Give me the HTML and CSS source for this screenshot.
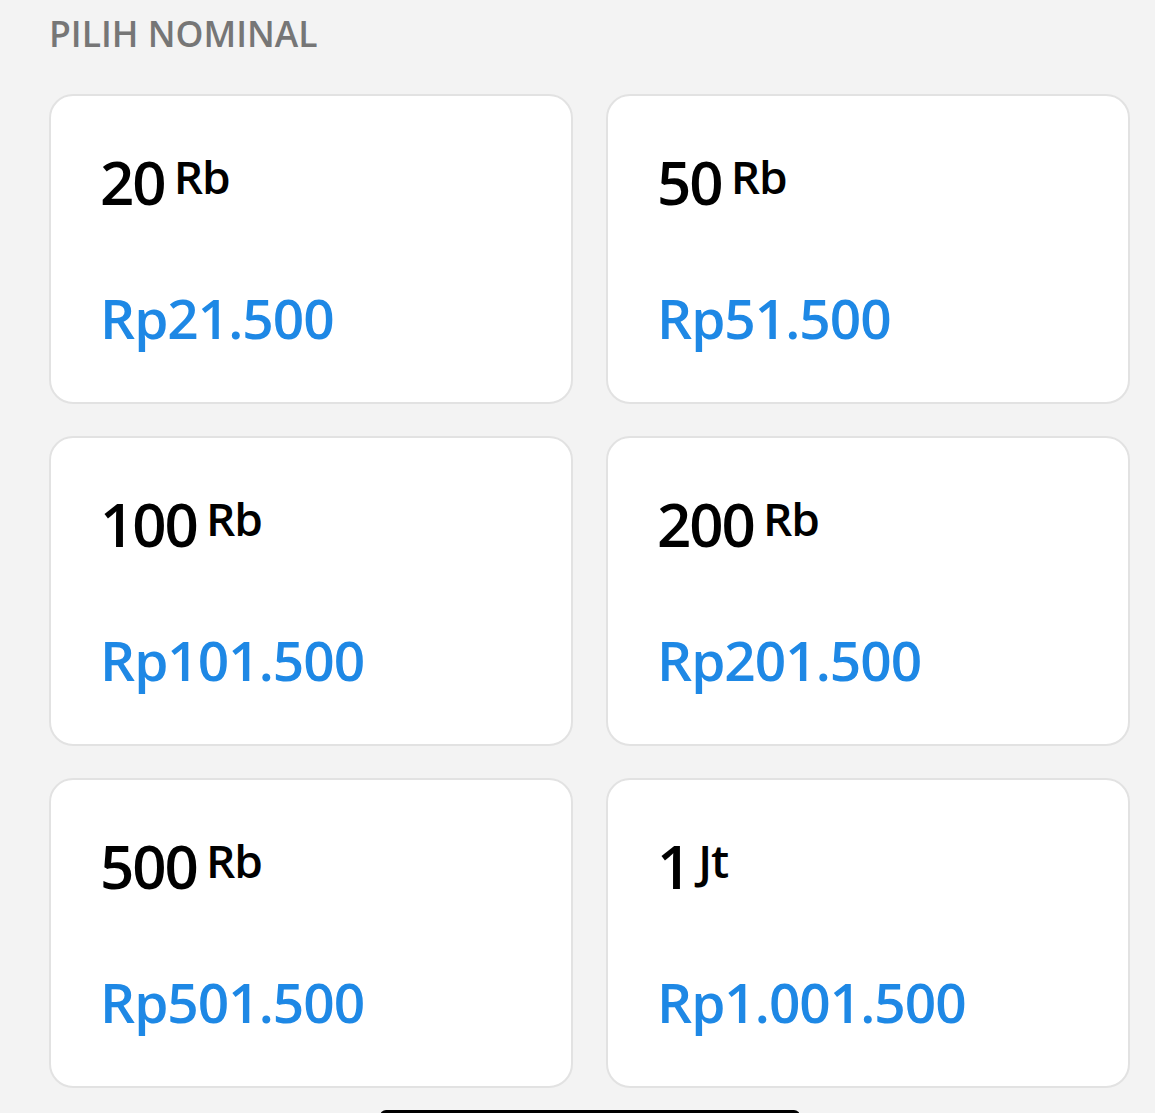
FILE: index.html
```html
<!DOCTYPE html>
<html>
<head>
<meta charset="utf-8">
<link rel="stylesheet" href="styles.css">
</head>
<body>
<div class="page">
  <div class="title">PILIH NOMINAL</div>
  <div class="grid">
    <div class="card"><div class="amount"><span class="num">20</span><span class="unit">Rb</span></div><div class="price">Rp21.500</div></div>
    <div class="card"><div class="amount"><span class="num">50</span><span class="unit">Rb</span></div><div class="price">Rp51.500</div></div>
    <div class="card"><div class="amount"><span class="num">100</span><span class="unit">Rb</span></div><div class="price">Rp101.500</div></div>
    <div class="card"><div class="amount"><span class="num">200</span><span class="unit">Rb</span></div><div class="price">Rp201.500</div></div>
    <div class="card"><div class="amount"><span class="num">500</span><span class="unit">Rb</span></div><div class="price">Rp501.500</div></div>
    <div class="card"><div class="amount"><span class="num">1</span><span class="unit">Jt</span></div><div class="price">Rp1.001.500</div></div>
  </div>
  <div class="home-bar"></div>
</div>
</body>
</html>
```
FILE: styles.css
```css
html, body {
  margin: 0;
  padding: 0;
  background: #f3f3f3;
  overflow: hidden;
  height: 1113px;
}
.page {
  font-family: "Open Sans", "Noto Sans", sans-serif;
  padding: 8px 0 0 49px;
}
.title {
  font-size: 35.5px;
  font-weight: 600;
  color: #767676;
  line-height: 50px;
  margin-bottom: 36px;
}
.grid {
  display: grid;
  grid-template-columns: 524px 524px;
  column-gap: 33px;
  row-gap: 32px;
}
.card {
  box-sizing: border-box;
  height: 310px;
  background: #fff;
  border: 2px solid #e2e2e2;
  border-radius: 24px;
  padding: 56px 0 0 49px;
}
.amount {
  display: flex;
  align-items: flex-start;
  color: #000;
  line-height: 1;
}
.num {
  font-size: 60px;
  font-weight: 600;
  letter-spacing: -2px;
  line-height: 60px;
}
.unit {
  font-size: 46px;
  font-weight: 600;
  letter-spacing: -1px;
  margin-left: 9px;
  margin-top: 1px;
  line-height: 46px;
}
.price {
  margin-top: 78px;
  font-size: 55px;
  font-weight: 600;
  color: #1e88e5;
  line-height: 1;
  letter-spacing: -1px;
}
.home-bar {
  margin: 22px 0 0 331px;
  width: 420px;
  height: 12px;
  background: #000;
  border-radius: 6px 6px 0 0;
}
```
